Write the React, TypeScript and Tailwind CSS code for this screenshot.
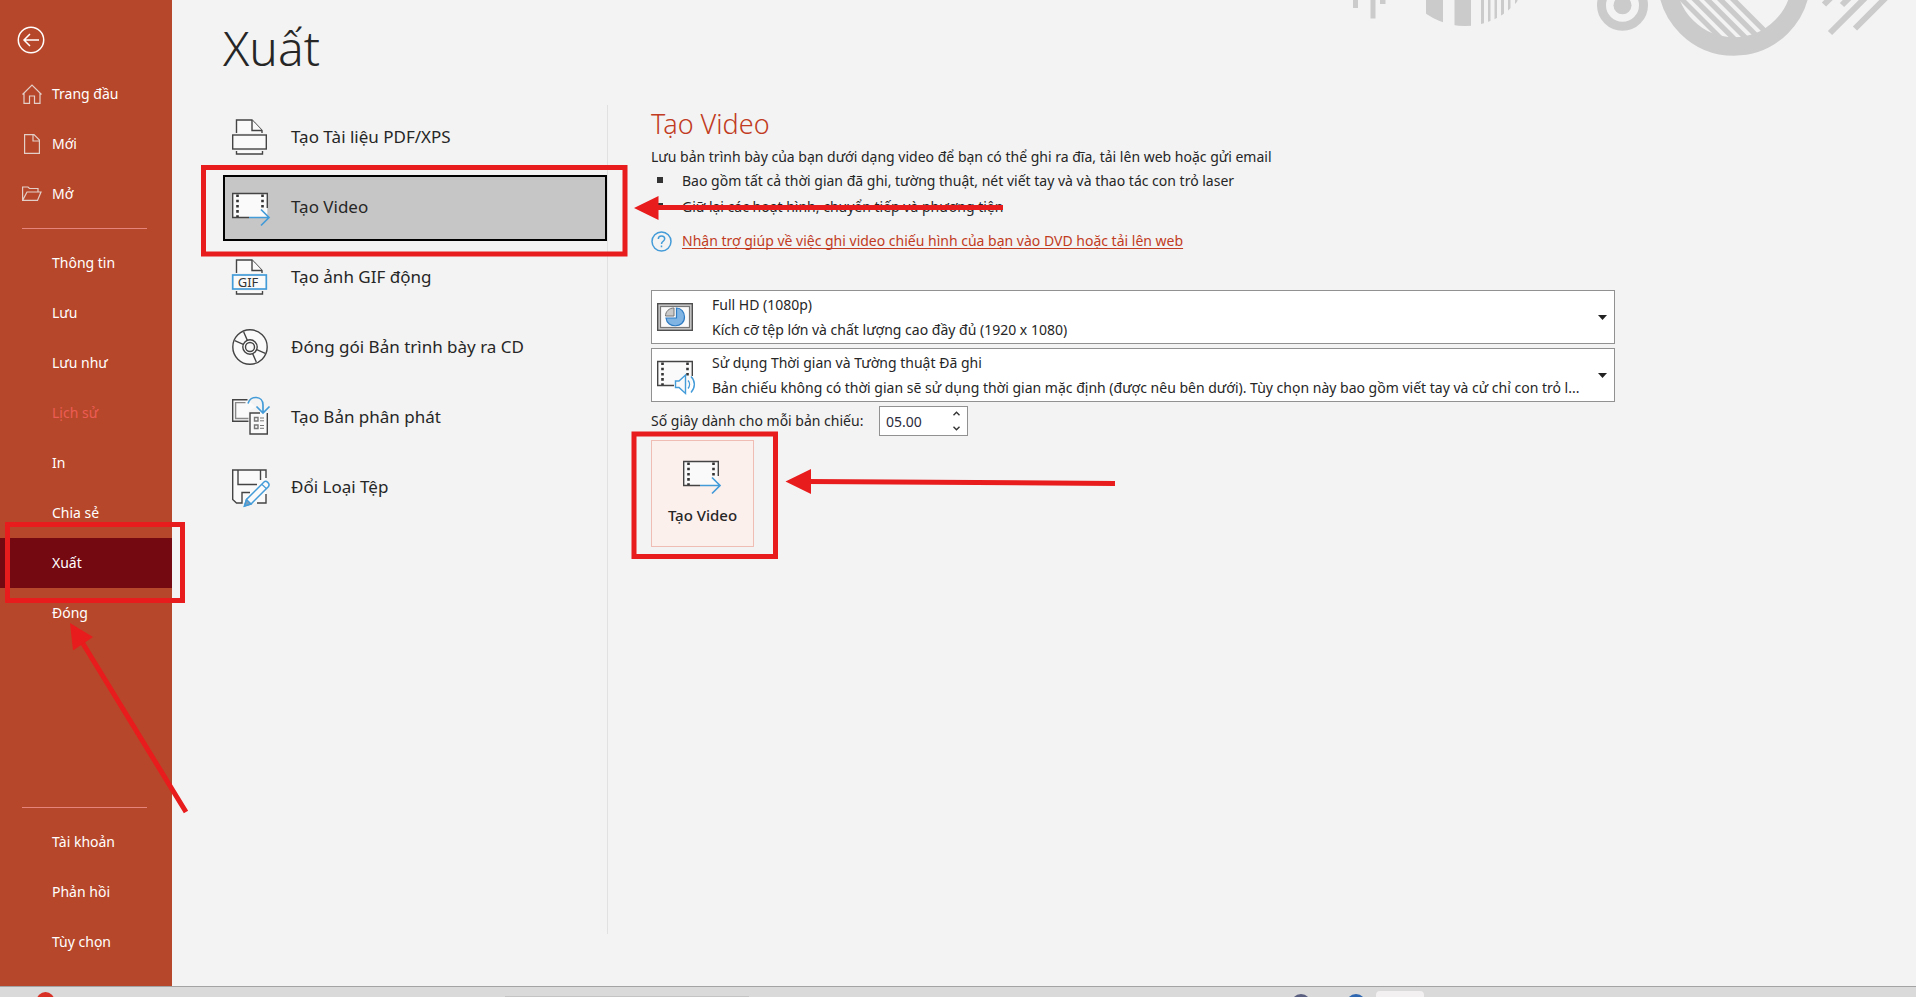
import type { ReactNode } from 'react';

function BackIcon() {
  return (
    <svg width="28" height="28" viewBox="0 0 28 28" fill="none" stroke="white" strokeWidth="1.5">
      <circle cx="14" cy="14" r="12.7" />
      <path d="M22 14H7.5M13 8L7 14l6 6" />
    </svg>
  );
}

function HomeIcon() {
  return (
    <svg width="20" height="20" viewBox="0 0 20 20" fill="none" stroke="#e3cfc8" strokeWidth="1.2">
      <path d="M0.5 10.5L10 1l9.500 9.500M2 9.500V19.300H7.500V12H12.500V19.300H18V9.500" />
    </svg>
  );
}

function NewIcon() {
  return (
    <svg width="20" height="20" viewBox="0 0 20 20" fill="none" stroke="#e3cfc8" strokeWidth="1.2">
      <path d="M2.600 0.600H12L17.400 6V19.400H2.600ZM11 0.600V7H17.400" />
    </svg>
  );
}

function OpenIcon() {
  return (
    <svg width="20" height="20" viewBox="0 0 20 20" fill="none" stroke="#e3cfc8" strokeWidth="1.2">
      <path d="M0.600 16.400V3H6l1.500 1.500H16V8M0.600 16.400L5 8H19L15.500 16.400Z" />
    </svg>
  );
}

function PdfIcon() {
  return (
    <svg className="overflow-visible" width="40" height="36" viewBox="0 0 40 36" fill="#fafafa" stroke="#444" strokeWidth="1.4">
      <path d="M4.500 14V1H20L30 11.500V14" />
      <path d="M20 1V11.500H30" />
      <rect x="0.7" y="16" width="33.6" height="14" />
      <path d="M4.500 32V35H30.500V32" />
    </svg>
  );
}

function GifIcon() {
  return (
    <svg className="overflow-visible" width="40" height="36" viewBox="0 0 40 36" fill="#fafafa" stroke="#444" strokeWidth="1.4">
      <path d="M4.500 14V1H20L30 11.500V14" />
      <path d="M20 1V11.500H30" />
      <rect x="0.7" y="16" width="33.6" height="14" stroke="#439bd8" strokeWidth="1.7" />
      <path d="M4.500 32V35H30.500V32" />
      <text x="16" y="28" textAnchor="middle" fontSize="13" fill="#333" stroke="none">
        GIF
      </text>
    </svg>
  );
}

function FilmFrame() {
  return (
    <>
      <path d="M0.700 4.500H35.300V28.500H0.700Z" fill="#fafafa" stroke="none" />
      <path d="M17 28.500H0.700V4.500H35.300V19" fill="none" stroke="#444" strokeWidth="1.4" />
      <path d="M5.500 5.500V28M30.500 5.500V20" fill="none" stroke="#333" strokeWidth="2.600" strokeDasharray="2.600 2.600" />
    </>
  );
}

function VideoIcon() {
  return (
    <svg className="overflow-visible" width="40" height="36" viewBox="0 0 40 36" fill="none">
      <FilmFrame />
      <path d="M17 28.500H37M29 20.500L37 28.500L29 36.500" stroke="#439bd8" strokeWidth="1.700" />
    </svg>
  );
}

function CdIcon() {
  return (
    <svg className="overflow-visible" width="40" height="36" viewBox="0 0 40 36" fill="#fafafa" stroke="#444" strokeWidth="1.4">
      <circle cx="18" cy="18" r="17.2" />
      <circle cx="18" cy="18" r="7.2" />
      <circle cx="18" cy="18" r="4.500" />
      <path d="M11.700 3L15.300 11.300M2.700 11.700L11.300 15.300M24.300 33L20.700 24.700M33.300 24.300L24.700 20.700" />
    </svg>
  );
}

function HandoutIcon() {
  return (
    <svg className="overflow-visible" width="40" height="36" viewBox="0 0 40 36" fill="none" strokeWidth="1.4">
      <path d="M15.500 0.700H0.700V22.300H16.500V12L24 8Z" fill="#fafafa" />
      <path d="M15.500 0.700H0.700V22.300H16.500" stroke="#444" />
      <path d="M13.500 3.600H3.600V19.500H16.500" stroke="#888" />
      <path d="M28 14H18V35H35.300V14" fill="#fafafa" stroke="#444" />
      <path d="M22.500 18.500h3.500v3.500h-3.500zM22.500 26h3.500v3.500h-3.500z" stroke="#777" />
      <path d="M28 19H32M28 21.800H32M28 26.500H32M28 29.300H32" stroke="#777" strokeWidth="1" />
      <path d="M16 4.500C18.500 -4 31 -3.500 31 6V13.500M24.500 7.500L31 14L37.500 7.500" stroke="#439bd8" strokeWidth="1.700" />
    </svg>
  );
}

function ChangeTypeIcon() {
  return (
    <svg className="overflow-visible" width="40" height="36" viewBox="0 0 40 36" fill="none" stroke="#444" strokeWidth="1.4">
      <path d="M0.700 1H34V34H4.500L0.700 30.500Z" fill="#fafafa" stroke="none" />
      <path d="M34 9V1H0.700V30.500L4.500 34H10V23.500H18M34 25V34H25M6 1V15.500H25M28.500 1V11" />
      <path d="M12.500 37L14.500 30.500L32 13C34 11 38.500 14.500 36.500 17.500L19 35Z" fill="#fafafa" stroke="#439bd8" strokeWidth="1.500" />
      <path d="M30 15.500L34.300 19.500" stroke="#439bd8" strokeWidth="1.200" />
      <path d="M12.500 37L14.500 30.500L19 35Z" fill="#7f9fb8" stroke="#439bd8" />
    </svg>
  );
}

function QualityIcon() {
  return (
    <svg className="shrink-0" width="36" height="28" viewBox="0 0 36 28" fill="none">
      <rect x="0.7" y="0.7" width="34.6" height="26.6" fill="#c9c9c9" stroke="#505050" strokeWidth="1.4" />
      <rect x="3.5" y="3.5" width="29" height="21" fill="#fafafa" stroke="#777" strokeWidth="1.2" />
      <path d="M19.500 5V15H9C10 25.500 27.500 25.500 27.500 14C27.500 9 24 5 19.500 5Z" fill="#7fb4e3" stroke="#2e7cc4" strokeWidth="1.2" />
      <path d="M17 5V13H8.500C8.500 8.500 12 5 17 5Z" fill="#c9c9c9" stroke="#777" strokeWidth="1" />
    </svg>
  );
}

function NarrationIcon() {
  return (
    <svg className="shrink-0 overflow-visible" width="36" height="28" viewBox="0 4 36 28" fill="none">
      <FilmFrame />
      <path d="M18.500 24H22L28.500 18V36.500L22 30.500H18.500Z" fill="#fafafa" stroke="#439bd8" strokeWidth="1.400" />
      <path d="M31 23.500C33 25.500 33 29 31 31.500M34 19.500C38.500 24 38.500 30.500 34 35.500" stroke="#439bd8" strokeWidth="1.400" />
    </svg>
  );
}

function HelpIcon() {
  return (
    <svg width="21" height="21" viewBox="0 0 21 21" fill="none" stroke="#439bd8" strokeWidth="1.500">
      <circle cx="10.500" cy="10.500" r="9.500" />
      <path d="M7.300 8C7.300 3.800 13.700 4 13.700 7.800C13.700 10.300 10.500 10.300 10.500 13M10.500 14.500V16.300" />
    </svg>
  );
}

// Office background pattern in the top right corner
function HeaderPattern() {
  return (
    <svg className="absolute top-0 right-0" width="566" height="60" viewBox="1350 0 566 60" fill="#cbcbcb">
      <defs>
        <clipPath id="striped-circle">
          <circle cx="1465" cy="-42" r="68" />
        </clipPath>
        <clipPath id="ring-hole">
          <circle cx="1734" cy="-20.500" r="60" />
        </clipPath>
      </defs>
      <path d="M1353 0h5v8h-5zM1370.500 0h5v18.500h-5zM1380 0h5.500v4h-5.500z" />
      <path
        clipPath="url(#striped-circle)"
        d="M1426 0h17v30h-17zM1454.500 0h16.500v30h-16.500zM1481 0h3v30h-3zM1488 0h2.500v30h-2.500zM1494.500 0h2.500v30h-2.500zM1501 0h3v30h-3zM1508 0h2.500v30h-2.500zM1515 0h2.500v30h-2.500z"
      />
      <circle cx="1622.500" cy="5.300" r="9" />
      <circle cx="1622.500" cy="5.300" r="21" fill="none" stroke="#cbcbcb" strokeWidth="9" />
      <circle cx="1734" cy="-20.500" r="67" fill="none" stroke="#cbcbcb" strokeWidth="18.400" />
      <path
        clipPath="url(#ring-hole)"
        d="M1679 0h7l50 50h-7zM1691.500 0h7.500l50 50h-7.500zM1704 0h7.500l50 50h-7.500zM1717 0h7.500l50 50h-7.500zM1730 0h7.500l50 50h-7.500z"
      />
      <path
        d="M1824 4.500l10 -10M1842 5l10 -10M1830 33l40 -40M1855 28.500l40 -40"
        stroke="#cbcbcb"
        strokeWidth="6"
      />
    </svg>
  );
}

// Red boxes and arrows drawn over the screen
function Annotations() {
  return (
    <svg className="absolute inset-0 w-full h-full pointer-events-none" fill="none" stroke="#e81c1c" strokeWidth="5">
      <rect x="203.500" y="167.500" width="421.500" height="86.500" />
      <rect x="634" y="434" width="141.500" height="122.500" />
      <rect x="7.500" y="524.500" width="175" height="76" />
      <path d="M655 207.500H1003M808 481.500L1115 483.500M82 642L186 812" />
      <path d="M634 208L658.500 196V220ZM785.500 481.500L811 469V494ZM70 623L93 637L73 650.500Z" fill="#e81c1c" stroke="none" />
    </svg>
  );
}

const topLinks: { label: string; icon: ReactNode }[] = [
  { label: 'Trang đầu', icon: <HomeIcon /> },
  { label: 'Mới', icon: <NewIcon /> },
  { label: 'Mở', icon: <OpenIcon /> },
];

const fileLinks = ['Thông tin', 'Lưu', 'Lưu như', 'Lịch sử', 'In', 'Chia sẻ', 'Xuất', 'Đóng'];
const bottomLinks = ['Tài khoản', 'Phản hồi', 'Tùy chọn'];

const exportOptions: { label: string; icon: ReactNode }[] = [
  { label: 'Tạo Tài liệu PDF/XPS', icon: <PdfIcon /> },
  { label: 'Tạo Video', icon: <VideoIcon /> },
  { label: 'Tạo ảnh GIF động', icon: <GifIcon /> },
  { label: 'Đóng gói Bản trình bày ra CD', icon: <CdIcon /> },
  { label: 'Tạo Bản phân phát', icon: <HandoutIcon /> },
  { label: 'Đổi Loại Tệp', icon: <ChangeTypeIcon /> },
];

function SideButton({ label }: { label: string }) {
  let look = 'text-white';
  if (label === 'Xuất') look = 'text-white bg-[#740912]';
  if (label === 'Lịch sử') look = 'text-[#ec5c54]';
  return (
    <button disabled={label === 'Lịch sử'} className={`block w-full h-[50px] pl-[52px] text-left ${look}`}>
      {label}
    </button>
  );
}

function Sidebar() {
  return (
    <nav className="w-[172px] shrink-0 flex flex-col bg-[#b7472a] pt-[26px] pb-[19px]">
      <button aria-label="Quay lại" className="ml-[17px] mb-[15px] w-7 h-7">
        <BackIcon />
      </button>
      {topLinks.map((item) => (
        <button key={item.label} className="flex items-center gap-2.5 w-full h-[50px] pl-[22px] text-white">
          {item.icon}
          {item.label}
        </button>
      ))}
      <div className="h-px ml-[22px] mr-[25px] my-[9px] bg-[#e6837a]" />
      {fileLinks.map((label) => (
        <SideButton key={label} label={label} />
      ))}
      <div className="mt-auto">
        <div className="h-px ml-[22px] mr-[25px] my-[9px] bg-[#e6837a]" />
        {bottomLinks.map((label) => (
          <SideButton key={label} label={label} />
        ))}
      </div>
    </nav>
  );
}

function ExportList() {
  return (
    <div className="w-[385px] shrink-0 flex flex-col gap-1 border-r border-[#e1e1e1]">
      {exportOptions.map((option) => (
        <button
          key={option.label}
          className={`flex items-center gap-[19px] h-[66px] pl-[7px] pb-0.5 border-2 text-[17px] text-left ${
            option.label === 'Tạo Video' ? 'border-black bg-[#c6c6c6]' : 'border-transparent'
          }`}
        >
          {option.icon}
          {option.label}
        </button>
      ))}
    </div>
  );
}

type ComboProps = { name: string; icon: ReactNode; title: string; detail: string };

function Combo({ name, icon, title, detail }: ComboProps) {
  return (
    <div className="relative flex items-center h-[54px] pl-[5px] pr-[7px] border border-[#919191] bg-white">
      {icon}
      <div className="flex-1 min-w-0 ml-[19px] leading-[25px] whitespace-nowrap overflow-hidden">
        <div>{title}</div>
        <div>{detail}</div>
      </div>
      <svg width="9" height="5" viewBox="0 0 9 5" fill="#222">
        <path d="M0 0H9L4.500 5Z" />
      </svg>
      <select aria-label={name} className="absolute inset-0 w-full h-full opacity-0">
        <option>{title}</option>
      </select>
    </div>
  );
}

function VideoPanel() {
  return (
    <section className="flex-1 min-w-0 max-w-[1007px] pl-[43px]">
      <h2 className="leading-[38px] mb-0.5 text-[27px] font-light text-[#c13b22]">Tạo Video</h2>
      <p className="leading-6">
        Lưu bản trình bày của bạn dưới dạng video để bạn có thể ghi ra đĩa, tải lên web hoặc gửi email
      </p>
      <ul className="flex flex-col gap-0.5 leading-6">
        <li className="flex gap-[19px] pl-1.5">
          <span className="w-1.5 h-1.5 mt-2 bg-[#333]" />
          Bao gồm tất cả thời gian đã ghi, tường thuật, nét viết tay và và thao tác con trỏ laser
        </li>
        <li className="flex gap-[19px] pl-1.5">
          <span className="w-1.5 h-1.5 mt-2 bg-[#333]" />
          Giữ lại các hoạt hình, chuyển tiếp và phương tiện
        </li>
      </ul>
      <div className="flex items-center gap-2.5 h-6 mt-2.5">
        <HelpIcon />
        <a href="#" className="underline underline-offset-2 [text-decoration-skip-ink:none] text-[#c13b22]">
          Nhận trợ giúp về việc ghi video chiếu hình của bạn vào DVD hoặc tải lên web
        </a>
      </div>

      <div className="flex flex-col gap-1 mt-[37px]">
        <Combo
          name="Chất lượng video"
          icon={<QualityIcon />}
          title="Full HD (1080p)"
          detail="Kích cỡ tệp lớn và chất lượng cao đầy đủ (1920 x 1080)"
        />
        <Combo
          name="Thời gian và tường thuật"
          icon={<NarrationIcon />}
          title="Sử dụng Thời gian và Tường thuật Đã ghi"
          detail="Bản chiếu không có thời gian sẽ sử dụng thời gian mặc định (được nêu bên dưới). Tùy chọn này bao gồm viết tay và cử chỉ con trỏ l..."
        />
        <div className="flex items-center">
          <label htmlFor="seconds" className="w-[228px]">
            Số giây dành cho mỗi bản chiếu:
          </label>
          <div className="flex items-center w-[89px] h-[30px] pl-1.5 pr-[7px] border border-[#919191] bg-white">
            <input id="seconds" defaultValue="05.00" className="flex-1 min-w-0 pt-0.5 bg-transparent text-[#2b2b3c] outline-none" />
            <div className="flex flex-col gap-2.5">
              <button aria-label="Tăng" className="block">
                <svg width="7" height="5" viewBox="0 0 7 5" fill="none" stroke="#333" strokeWidth="1.400">
                  <path d="M0.500 4.200L3.500 1.200L6.500 4.200" />
                </svg>
              </button>
              <button aria-label="Giảm" className="block">
                <svg width="7" height="5" viewBox="0 0 7 5" fill="none" stroke="#333" strokeWidth="1.400">
                  <path d="M0.500 0.800L3.500 3.800L6.500 0.800" />
                </svg>
              </button>
            </div>
          </div>
        </div>
        <button className="flex flex-col items-center gap-3 w-[103px] h-[107px] pt-4 border border-[#f0bdb5] bg-[#fcf0ed] text-[15px] font-medium">
          <VideoIcon />
          Tạo Video
        </button>
      </div>
    </section>
  );
}

function Taskbar() {
  return (
    <footer className="h-[11px] border-t border-[#a3a3a3] bg-[#dadada] overflow-hidden">
      <svg width="100%" height="10">
        <circle cx="45.500" cy="14" r="9" fill="#d93025" />
        <rect x="505" y="9" width="244" height="4" fill="#c4c4c4" />
        <circle cx="1301" cy="17" r="10" fill="#5a5f80" />
        <circle cx="1356" cy="17" r="10" fill="#2f67b1" />
        <rect x="1376" y="4" width="48" height="20" rx="4" fill="#f2f0f0" />
      </svg>
    </footer>
  );
}

export default function App() {
  return (
    <div className="relative flex flex-col min-h-screen bg-[#f3f3f3] font-['Noto_Sans','Open_Sans',sans-serif] text-sm text-[#262626]">
      <div className="flex flex-1">
        <Sidebar />
        <main className="relative flex-1 min-w-0 flex flex-col pl-[51px] pb-[52px]">
          <HeaderPattern />
          <h1 className="h-[105px] leading-[96px] text-[48px] font-light">Xuất</h1>
          <div className="flex flex-1">
            <ExportList />
            <VideoPanel />
          </div>
        </main>
      </div>
      <Taskbar />
      <Annotations />
    </div>
  );
}
